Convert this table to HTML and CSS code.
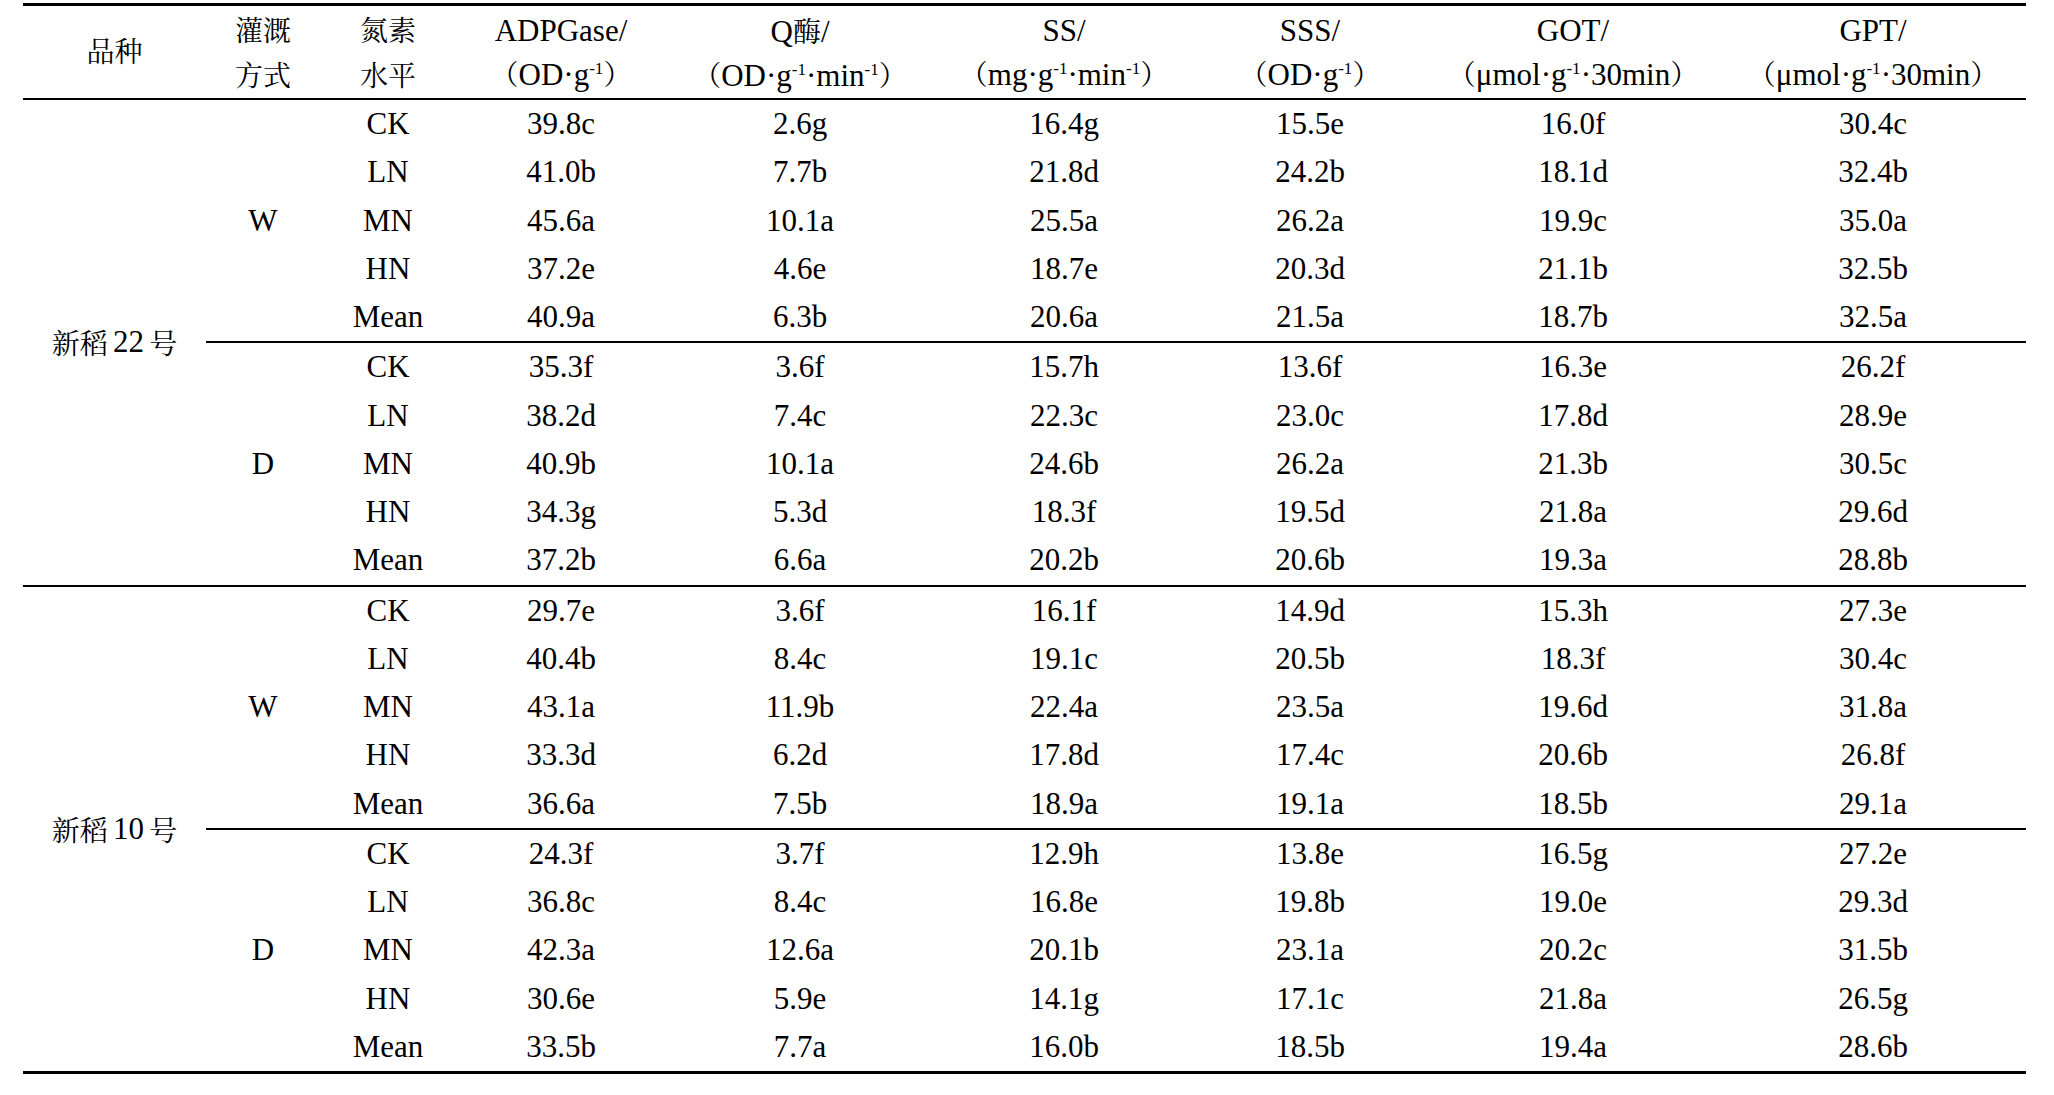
FILE: index.html
```html
<!DOCTYPE html>
<html lang="zh">
<head>
<meta charset="utf-8">
<title>表</title>
<link rel="stylesheet" href="styles.css">
</head>
<body>
<div class="tbl">
  <div class="rule thick"></div>
  <div class="head">
    <div class="hc"><span class="zh">品种</span></div>
    <div class="hc"><span class="zh">灌溉</span><span class="zh">方式</span></div>
    <div class="hc"><span class="zh">氮素</span><span class="zh">水平</span></div>
    <div class="hc"><span>ADPGase/</span><span><span class="zh">（</span>OD·g<sup>-1</sup><span class="zh">）</span></span></div>
    <div class="hc"><span>Q<span class="zh">酶</span>/</span><span><span class="zh">（</span>OD·g<sup>-1</sup>·min<sup>-1</sup><span class="zh">）</span></span></div>
    <div class="hc"><span>SS/</span><span><span class="zh">（</span>mg·g<sup>-1</sup>·min<sup>-1</sup><span class="zh">）</span></span></div>
    <div class="hc"><span>SSS/</span><span><span class="zh">（</span>OD·g<sup>-1</sup><span class="zh">）</span></span></div>
    <div class="hc"><span>GOT/</span><span><span class="zh">（</span>μmol·g<sup>-1</sup>·30min<span class="zh">）</span></span></div>
    <div class="hc"><span>GPT/</span><span><span class="zh">（</span>μmol·g<sup>-1</sup>·30min<span class="zh">）</span></span></div>
  </div>
  <div class="rule"></div>

  <div class="cult">
    <div class="cname"><span class="zh">新稻</span>&#8198;22&#8198;<span class="zh">号</span></div>
    <div class="cbody">
      <div class="grp">
        <div class="irr">W</div>
        <div class="rows">
          <div class="row"><span>CK</span><span>39.8c</span><span>2.6g</span><span>16.4g</span><span>15.5e</span><span>16.0f</span><span>30.4c</span></div>
          <div class="row"><span>LN</span><span>41.0b</span><span>7.7b</span><span>21.8d</span><span>24.2b</span><span>18.1d</span><span>32.4b</span></div>
          <div class="row"><span>MN</span><span>45.6a</span><span>10.1a</span><span>25.5a</span><span>26.2a</span><span>19.9c</span><span>35.0a</span></div>
          <div class="row"><span>HN</span><span>37.2e</span><span>4.6e</span><span>18.7e</span><span>20.3d</span><span>21.1b</span><span>32.5b</span></div>
          <div class="row"><span>Mean</span><span>40.9a</span><span>6.3b</span><span>20.6a</span><span>21.5a</span><span>18.7b</span><span>32.5a</span></div>
        </div>
      </div>
      <div class="rule"></div>
      <div class="grp">
        <div class="irr">D</div>
        <div class="rows">
          <div class="row"><span>CK</span><span>35.3f</span><span>3.6f</span><span>15.7h</span><span>13.6f</span><span>16.3e</span><span>26.2f</span></div>
          <div class="row"><span>LN</span><span>38.2d</span><span>7.4c</span><span>22.3c</span><span>23.0c</span><span>17.8d</span><span>28.9e</span></div>
          <div class="row"><span>MN</span><span>40.9b</span><span>10.1a</span><span>24.6b</span><span>26.2a</span><span>21.3b</span><span>30.5c</span></div>
          <div class="row"><span>HN</span><span>34.3g</span><span>5.3d</span><span>18.3f</span><span>19.5d</span><span>21.8a</span><span>29.6d</span></div>
          <div class="row"><span>Mean</span><span>37.2b</span><span>6.6a</span><span>20.2b</span><span>20.6b</span><span>19.3a</span><span>28.8b</span></div>
        </div>
      </div>
    </div>
  </div>
  <div class="rule"></div>

  <div class="cult">
    <div class="cname"><span class="zh">新稻</span>&#8198;10&#8198;<span class="zh">号</span></div>
    <div class="cbody">
      <div class="grp">
        <div class="irr">W</div>
        <div class="rows">
          <div class="row"><span>CK</span><span>29.7e</span><span>3.6f</span><span>16.1f</span><span>14.9d</span><span>15.3h</span><span>27.3e</span></div>
          <div class="row"><span>LN</span><span>40.4b</span><span>8.4c</span><span>19.1c</span><span>20.5b</span><span>18.3f</span><span>30.4c</span></div>
          <div class="row"><span>MN</span><span>43.1a</span><span>11.9b</span><span>22.4a</span><span>23.5a</span><span>19.6d</span><span>31.8a</span></div>
          <div class="row"><span>HN</span><span>33.3d</span><span>6.2d</span><span>17.8d</span><span>17.4c</span><span>20.6b</span><span>26.8f</span></div>
          <div class="row"><span>Mean</span><span>36.6a</span><span>7.5b</span><span>18.9a</span><span>19.1a</span><span>18.5b</span><span>29.1a</span></div>
        </div>
      </div>
      <div class="rule"></div>
      <div class="grp">
        <div class="irr">D</div>
        <div class="rows">
          <div class="row"><span>CK</span><span>24.3f</span><span>3.7f</span><span>12.9h</span><span>13.8e</span><span>16.5g</span><span>27.2e</span></div>
          <div class="row"><span>LN</span><span>36.8c</span><span>8.4c</span><span>16.8e</span><span>19.8b</span><span>19.0e</span><span>29.3d</span></div>
          <div class="row"><span>MN</span><span>42.3a</span><span>12.6a</span><span>20.1b</span><span>23.1a</span><span>20.2c</span><span>31.5b</span></div>
          <div class="row"><span>HN</span><span>30.6e</span><span>5.9e</span><span>14.1g</span><span>17.1c</span><span>21.8a</span><span>26.5g</span></div>
          <div class="row"><span>Mean</span><span>33.5b</span><span>7.7a</span><span>16.0b</span><span>18.5b</span><span>19.4a</span><span>28.6b</span></div>
        </div>
      </div>
    </div>
  </div>
  <div class="rule thick"></div>
</div>
</body>
</html>
```

FILE: styles.css
```css
html, body {
  margin: 0;
  padding: 0;
  background: #ffffff;
}

body {
  color: #000000;
  font-family: "Liberation Serif", "Noto Serif CJK SC", "Noto Sans CJK SC", serif;
  font-size: 31px;
}

.tbl {
  width: 2003px;
  margin: 3px 0 0 23px;
  display: flex;
  flex-direction: column;
}

.rule {
  height: 2px;
  background: #000000;
}

.rule.thick {
  height: 3px;
}

.zh {
  font-family: "Noto Serif CJK SC", "Noto Sans CJK SC", sans-serif;
  font-size: 28px;
}

sup {
  font-size: 0.55em;
  vertical-align: 0.62em;
  line-height: 0;
}

.head {
  display: grid;
  grid-template-columns: 183px 114px 136px 210px 268px 260px 232px 294px 306px;
  height: 92px;
}

.hc {
  display: flex;
  flex-direction: column;
  align-items: center;
  justify-content: center;
  line-height: 42px;
  padding-top: 2px;
  white-space: nowrap;
}

.hc > .zh:first-child {
  margin-top: -3px;
  margin-bottom: 3px;
}

.cult {
  display: flex;
}

.cname {
  width: 183px;
  flex: none;
  display: flex;
  align-items: center;
  justify-content: center;
  white-space: nowrap;
}

.cbody {
  flex: 1;
  display: flex;
  flex-direction: column;
}

.grp {
  display: flex;
}

.irr {
  width: 114px;
  flex: none;
  display: flex;
  align-items: center;
  justify-content: center;
}

.rows {
  flex: 1;
  display: flex;
  flex-direction: column;
}

.row {
  display: grid;
  grid-template-columns: 136px 210px 268px 260px 232px 294px 306px;
  height: 48.25px;
  align-items: center;
  justify-items: center;
  white-space: nowrap;
}
```
